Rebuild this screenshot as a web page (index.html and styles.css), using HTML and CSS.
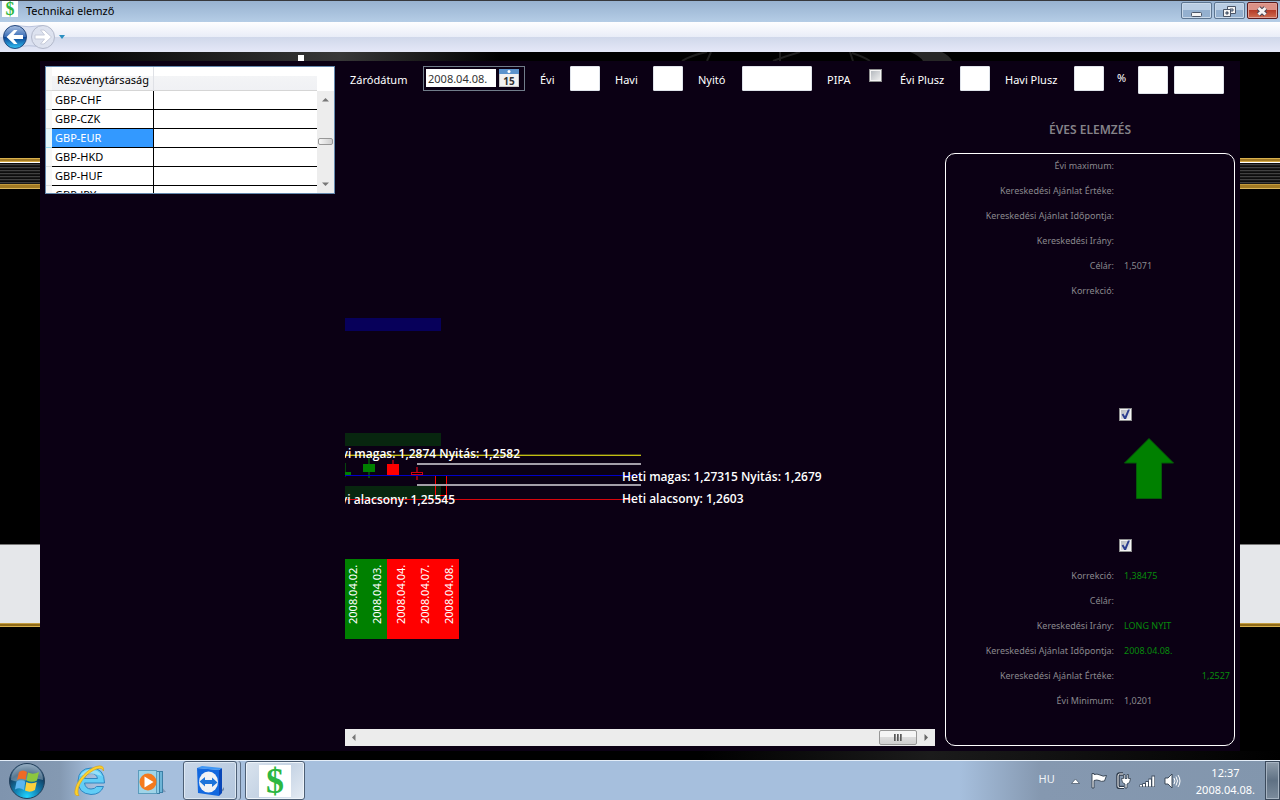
FILE: index.html
```html
<!DOCTYPE html>
<html lang="hu">
<head>
<meta charset="utf-8">
<title>Technikai elemző</title>
<link rel="stylesheet" href="styles.css">
</head>
<body>
<div class="window">
  <header class="titlebar">
    <span class="logo logo-small">$</span>
    <h1 class="title">Technikai elemző</h1>
    <div class="win-buttons">
      <button class="win-btn" aria-label="Kis méret"><svg width="31" height="16"><rect x="10.500" y="9.500" width="10" height="4" rx="1" fill="#f4f4f4" stroke="#4a5567"/></svg></button>
      <button class="win-btn" aria-label="Előző méret"><svg width="31" height="16"><g fill="#f4f4f4" stroke="#4a5567"><path d="M13.500 3.500H21.500V10.500H13.500ZM16 6V8H19V6Z" fill-rule="evenodd"/><path d="M9.500 6.500H16.500V13.500H9.500ZM12 9V11H14V9Z" fill-rule="evenodd"/></g></svg></button>
      <button class="win-btn win-close" aria-label="Bezárás"><svg width="31" height="16"><path d="M11.500 5l7 6.500M18.500 5l-7 6.500" stroke="#4b4654" stroke-width="5"/><path d="M11.500 5l7 6.500M18.500 5l-7 6.500" stroke="#f6f2f2" stroke-width="3"/></svg></button>
    </div>
  </header>

  <nav class="navbar">
    <svg class="nav-link-shape" width="70" height="30" aria-hidden="true"><path d="M15 3.500Q29 6 43 3.500V25.500Q29 22 15 25.500Z" fill="#dbe1f1" stroke="#b9c2dc"/></svg>
    <button class="nav-btn" aria-label="Vissza"><svg width="26" height="26" viewBox="0 0 26 26"><defs><linearGradient id="b1" x2="0" y2="1"><stop offset="0" stop-color="#a9bfe0"/><stop offset=".48" stop-color="#3c6fb8"/><stop offset=".5" stop-color="#0b3f91"/><stop offset="1" stop-color="#32c4f5"/></linearGradient></defs><circle cx="13" cy="13" r="11.500" fill="url(#b1)" stroke="#25497f"/><path d="M4.500 13L12 6H15.500L11.500 11H21V15H11.500L15.500 20H12Z" fill="#fff"/></svg></button>
    <button class="nav-btn" aria-label="Előre"><svg width="26" height="26" viewBox="0 0 26 26"><circle cx="13" cy="13" r="11.500" fill="#dde2ef" stroke="#b3b9cb"/><path d="M21.500 13L14 6H10.500L14.500 11H5V15H14.500L10.500 20H14Z" fill="#fff" stroke="#c5cad9"/></svg></button>
    <button class="nav-more" aria-label="Előzmények"><svg width="8" height="6"><path d="M1 1H7L4 5Z" fill="#2a8fc0"/></svg></button>
  </nav>

  <main class="stage">
    <svg class="backdrop" width="300" height="9" aria-hidden="true"><path d="M2 9Q12 3 27 0M27 9L31 0M93 9Q106 4 120 0M100 9V0M170 0l3 9M172 1Q184 5 190 9" fill="none" stroke="#1f1f1f" stroke-width="2"/><path d="M230 0H262Q270 4 272 9H243Q240 4 230 0Z" fill="#272727"/></svg>
    <span class="marker"></span>
    <div class="panel">
      <section class="grid-box">
        <table class="symbols">
          <thead><tr><th class="row-head"></th><th class="name">Részvénytársaság</th><th></th></tr></thead>
          <tbody>
            <tr><td class="row-head"></td><td class="name">GBP-CHF</td><td></td></tr>
            <tr><td class="row-head"></td><td class="name">GBP-CZK</td><td></td></tr>
            <tr class="selected"><td class="row-head"></td><td class="name">GBP-EUR</td><td></td></tr>
            <tr><td class="row-head"></td><td class="name">GBP-HKD</td><td></td></tr>
            <tr><td class="row-head"></td><td class="name">GBP-HUF</td><td></td></tr>
            <tr><td class="row-head"></td><td class="name">GBP-JPY</td><td></td></tr>
          </tbody>
        </table>
        <div class="vscroll">
          <button aria-label="Fel"><svg width="7" height="5"><path d="M0 4.500L3.500 1L7 4.500Z" fill="#777"/></svg></button>
          <span class="vthumb"></span>
          <button aria-label="Le"><svg width="7" height="5"><path d="M0 .5L3.500 4L7 .5Z" fill="#777"/></svg></button>
        </div>
      </section>

      <form class="toolbar">
        <label class="w58" for="date">Záródátum</label>
        <div class="date-picker">
          <input id="date" type="text" value="2008.04.08.">
          <button type="button" aria-label="Naptár"><svg width="20" height="18"><rect width="20" height="18" fill="#c9c9c9"/><rect x="1" y="5" width="18" height="12" fill="#f1f1f1"/><rect width="20" height="5" fill="#5b93cc"/><circle cx="10" cy="2.500" r="1.500" fill="#fff"/><text class="cal-text" x="10" y="16" text-anchor="middle">15</text></svg></button>
        </div>
        <label class="w15" for="evi">Évi</label><input class="box" id="evi" type="text">
        <label class="w23" for="havi">Havi</label><input class="box" id="havi" type="text">
        <label class="w29" for="nyito">Nyitó</label><input class="box box-wide" id="nyito" type="text">
        <label class="w27" for="pipa">PIPA</label><input class="check check-top" id="pipa" type="checkbox">
        <label class="w45" for="eviplusz">Évi Plusz</label><input class="box" id="eviplusz" type="text">
        <label class="w54" for="haviplusz">Havi Plusz</label><input class="box" id="haviplusz" type="text">
        <div class="percent"><label for="pct">%</label><input class="box box-tall" id="pct" type="text"><input class="box box-tall box-50" type="text" aria-label="Érték"></div>
      </form>

      <section class="chart">
        <svg class="plot" role="img" aria-label="Árfolyam grafikon">
          <rect y="214" width="96" height="13" fill="#07005a"/>
          <rect y="329" width="96" height="13" fill="#08260f"/>
          <rect x="90" y="371" width="12" height="21" fill="#000"/>
          <rect y="382" width="96" height="14" fill="#08260f"/>
          <rect y="350" width="296" height="1" fill="#4a4617"/>
          <rect y="351" width="296" height="1" fill="#c3bd10"/>
          <g fill="#06440c"><rect y="359" width="1" height="14"/><rect x="23" y="354" width="2" height="20"/></g>
          <g fill="green"><rect y="368" width="6" height="3"/><rect x="18" y="360" width="12" height="8"/></g>
          <g fill="#8c0012"><rect x="47" y="356" width="2" height="15"/><rect x="71" y="363" width="2" height="13"/></g>
          <rect x="42" y="360" width="12" height="11" fill="red"/>
          <rect x="66.500" y="368.500" width="11" height="2" fill="#000" stroke="#d00010"/>
          <path d="M90.500 391.500V371.500H101.500V391.500Z" fill="none" stroke="red"/>
          <path d="M0 371.500H296" stroke="#0000c8"/>
          <path d="M72 360H296M72 381H296" stroke="#a39ea8" stroke-width="2"/>
          <path d="M0 395.500H287" stroke="#d9050c"/>
          <g class="plot-text">
            <text x="175" y="354" text-anchor="end">vi magas: 1,2874 Nyitás: 1,2582</text>
            <text x="110" y="400" text-anchor="end">vi alacsony: 1,25545</text>
            <text x="277" y="377">Heti magas: 1,27315 Nyitás: 1,2679</text>
            <text x="277" y="399">Heti alacsony: 1,2603</text>
          </g>
          <rect y="455" width="42" height="80" fill="green"/>
          <rect x="42" y="455" width="72" height="80" fill="red"/>
          <g class="plot-dates">
            <text transform="translate(12 520) rotate(-90)">2008.04.02.</text>
            <text transform="translate(36 520) rotate(-90)">2008.04.03.</text>
            <text transform="translate(60 520) rotate(-90)">2008.04.04.</text>
            <text transform="translate(84 520) rotate(-90)">2008.04.07.</text>
            <text transform="translate(108 520) rotate(-90)">2008.04.08.</text>
          </g>
        </svg>
        <div class="hscroll">
          <button aria-label="Balra"><svg width="5" height="7"><path d="M4.500 0L1 3.500L4.500 7Z" fill="#777"/></svg></button>
          <span class="hthumb"><i></i><i></i><i></i></span>
          <button aria-label="Jobbra"><svg width="5" height="7"><path d="M.5 0L4 3.500L.5 7Z" fill="#666"/></svg></button>
        </div>
      </section>

      <aside class="analysis">
        <h2>ÉVES ELEMZÉS</h2>
        <div class="frame">
          <dl class="facts">
            <dt>Évi maximum:</dt><dd></dd>
            <dt>Kereskedési Ajánlat Értéke:</dt><dd></dd>
            <dt>Kereskedési Ajánlat Időpontja:</dt><dd></dd>
            <dt>Kereskedési Irány:</dt><dd></dd>
            <dt>Célár:</dt><dd>1,5071</dd>
            <dt>Korrekció:</dt><dd></dd>
          </dl>
          <div class="signal">
            <input class="check" type="checkbox" checked aria-label="Felső jelzés">
            <svg class="arrow" width="50" height="61" viewBox="0 0 50 61"><path d="M25 .5L49.500 25H37.500V60.500H12.500V25H.5Z" fill="green" stroke="#045a08"/></svg>
            <input class="check" type="checkbox" checked aria-label="Alsó jelzés">
          </div>
          <dl class="facts">
            <dt>Korrekció:</dt><dd class="green">1,38475</dd>
            <dt>Célár:</dt><dd></dd>
            <dt>Kereskedési Irány:</dt><dd class="green">LONG NYIT</dd>
            <dt>Kereskedési Ajánlat Időpontja:</dt><dd class="green">2008.04.08.</dd>
            <dt>Kereskedési Ajánlat Értéke:</dt><dd class="green right">1,2527</dd>
            <dt>Évi Minimum:</dt><dd>1,0201</dd>
          </dl>
        </div>
      </aside>
    </div>
  </main>

  <footer class="taskbar">
    <button class="task start" aria-label="Start"><svg width="38" height="38" viewBox="0 0 38 38"><defs><radialGradient id="orb" cx=".5" cy=".95" r=".9"><stop offset="0" stop-color="#22d4ff"/><stop offset=".4" stop-color="#117fb0"/><stop offset=".75" stop-color="#123f63"/><stop offset="1" stop-color="#5b7f9e"/></radialGradient></defs><circle cx="19" cy="19" r="17.500" fill="url(#orb)" stroke="#23405c"/><path d="M3 18A16 16 0 0 1 35 18Q27 15 19 18T3 18Z" fill="#fff" opacity=".3"/><path d="M11 10Q15 7 19 10L17.500 18Q13 15.500 9 18Z" fill="#ee6a25"/><path d="M20 10.500Q25 13 31 10L29 18.500Q24 21 18.500 18.500Z" fill="#8cc63e"/><path d="M8.500 19.500Q13 17 17.300 19.500L16 28Q11.500 25 7 27.500Z" fill="#5db6f0"/><path d="M18.300 20Q23 22.500 28.700 20L27 28Q22 31 17 28.500Z" fill="#fcd03c"/></svg></button>
    <button class="task ie" aria-label="Internet Explorer"><svg width="36" height="36" viewBox="0 0 36 36"><path d="M33.500 20H13.500Q14.500 26 20 26Q24 26 25.500 23.500H32.500Q29.500 31.500 20 31.500Q7 30.500 7 18Q7.500 5.500 20 5Q33.500 5 33.500 20ZM13.500 15.500H26.500Q25.500 10.500 20 10.500Q14.500 10.500 13.500 15.500Z" fill="#62cdf6" stroke="#2f86c2" fill-rule="evenodd"/><path d="M9 13Q12 7 19 6.500Q28 6.500 31 13Q20 9 9 13Z" fill="#b8ecfc" opacity=".6"/><path d="M8 32.500Q2 34 4.500 25C7 16 17 6 25 3.500Q33.500 1 32.500 8Q31 4 25.500 6C17 9 8 19 7 27Q6.500 30.500 8 32.500Z" fill="#fbd22c" stroke="#d69b12" stroke-width=".6"/></svg></button>
    <button class="task media" aria-label="Médialejátszó"><svg width="32" height="32" viewBox="0 0 32 32"><path d="M8 28l22-1-5-6Z" fill="#6f87a6" opacity=".7"/><rect x="9.500" y="6.500" width="17" height="21" fill="#6db4d6" stroke="#3c7fa6"/><rect x="6.500" y="6.500" width="17" height="22" fill="#8ccae4" stroke="#3c7fa6"/><rect x="2.500" y="5.500" width="18" height="23" fill="#9fd4e8" stroke="#5b9cbd"/><circle cx="12" cy="17" r="8.500" fill="#f47a1e"/><path d="M8.500 11.500L17.500 17L8.500 22.500Z" fill="#fff"/></svg></button>
    <button class="task open stacked" aria-label="TeamViewer"><svg width="32" height="32" viewBox="0 0 32 32"><path d="M24 30l6-5v-3Z" fill="#6f87a6"/><path d="M3 3L25 5V31L4 28Z" fill="#1268df"/><path d="M25 5L28 3V28L25 31Z" fill="#0a47b8"/><path d="M3 3L8 1L28 3L25 5Z" fill="#3f97f5"/><ellipse cx="14.500" cy="17" rx="9.500" ry="10.500" fill="#f0f2f5"/><path d="M5.500 16.500L11 12V15H18V12.500L23.500 17.500L18 22V19H11V21.500Z" fill="#1d74da"/></svg></button>
    <button class="task open" aria-label="Technikai elemző"><span class="logo">$</span></button>
    <div class="tray">
      <span class="lang">HU</span>
      <svg width="9" height="6"><path d="M.5 5.500L4.500 1L8.500 5.500Z" fill="#fff" stroke="#3f4d5e" stroke-width=".7"/></svg>
      <svg class="flag" width="16" height="17" viewBox="0 0 16 17"><path d="M1 16V1.500H3V2.500Q6 1.500 9 3Q12 5 15.500 3.500L13.500 9Q10 10 8 8.500Q6 7.500 3 8.500V16Z" fill="#fff" stroke="#303d4d" stroke-width=".9"/></svg>
      <svg width="15" height="17" viewBox="0 0 15 17"><path d="M7 2H3.500Q2 2 2 4V14Q2 15.500 3.500 15.500H8" fill="none" stroke="#303d4d" stroke-width="3.500"/><path d="M7 2H3.500Q2 2 2 4V14Q2 15.500 3.500 15.500H8" fill="none" stroke="#fff"/><path d="M5.500 6.500H7.500V2.500H9V6.500H11V2.500H12.500V6.500H14.500L13.500 10.500L11 12V16H9V12L6.500 10.500Z" fill="#fff" stroke="#303d4d" stroke-width=".8"/></svg>
      <svg width="17" height="14" viewBox="0 0 17 14"><path d="M.5 10.500H3.500V9H6.500V7H9.500V4.500H12.500V1.500H16V13H.5Z" fill="#3f4d5e"/><path d="M2 11V12.500M5 10V12.500M8 8V12.500M11 5.500V12.500M14.300 2.500V12.500" stroke="#fff" stroke-width="2"/></svg>
      <svg width="17" height="16" viewBox="0 0 17 16"><path d="M1 5H4L8 1V15L4 11H1Z" fill="#fff" stroke="#303d4d" stroke-width=".9"/><path d="M10 5Q12 8 10 11M12 3.500Q15 8 12 12.500M14 2Q18 8 14 14" fill="none" stroke="#fff"/></svg>
      <time class="clock"><span>12:37</span><span>2008.04.08.</span></time>
      <button class="show-desktop" aria-label="Asztal megjelenítése"></button>
    </div>
  </footer>
</div>
</body>
</html>
```
FILE: styles.css
```css
* { box-sizing: border-box; }
body { margin: 0; background: #000; color: #fff; font: 11px/16px "Noto Sans", "Open Sans", sans-serif; }
button, input { font: inherit; margin: 0; padding: 0; border: 0; }
button { background: none; display: flex; align-items: center; justify-content: center; }
svg { display: block; flex: none; }
h1, h2, dl, dd { margin: 0; }

.window { min-height: 100vh; display: flex; flex-direction: column; }

.titlebar { display: flex; height: 22px; border-top: 1px solid #37383c; background: linear-gradient(#98b2d0, #b5cde6); color: #000; padding: 0 2px; }
.title { font-size: 11px; font-weight: 400; line-height: 20px; flex: 1; }
.logo { width: 32px; height: 32px; background: #fff; color: #2cb742; font: 700 36px/32px "Liberation Serif", serif; text-align: center; }
.logo-small { width: 16px; height: 16px; margin-right: 8px; font-size: 18px; line-height: 16px; }
.win-buttons { display: flex; gap: 2px; padding-top: 1px; }
.win-btn { width: 31px; height: 17px; border: 1px solid #5d7590; border-radius: 2px; background: linear-gradient(#b9cde3 50%, #94b0cf 50%); box-shadow: inset 0 0 0 1px #c9d9ea; }
.win-close { border-color: #5c1a1c; background: linear-gradient(#dc9186 50%, #b63c28 50%, #cf6d51); box-shadow: inset 0 0 0 1px #e0a196; }

.navbar { position: relative; display: flex; align-items: center; gap: 2px; height: 30px; padding: 0 2px; background: linear-gradient(#fefeff, #e9edf7 50%, #d0d8ea 50%, #e5e8f8); }
.nav-link-shape { position: absolute; left: 0; top: 0; }
.nav-btn { position: relative; width: 26px; height: 26px; }
.nav-more { width: 8px; }

.stage {
  flex: 1; position: relative; display: flex; padding: 9px 40px;
  background:
    linear-gradient(90deg, #000 60px, #383838 340px, #000 500px, #000) 0 0 / 100% 9px no-repeat,
    linear-gradient(90deg, #000 700px, #1b1b1b 930px, #000) 0 100% / 100% 9px no-repeat,
    repeating-linear-gradient(#0d0d0d 0 1px, #414141 1px 2px, #191919 2px 3px) 0 111px / 100% 21px no-repeat,
    linear-gradient(#d7b04e 0 1px, #a27a24 1px 3px, #d4a945 3px 4px, #fff 4px 5px, #151515 5px 26px, #c39a3b 26px 27px, #a27a24 27px 30px, #dab65c 30px 31px) 0 106px / 100% 31px no-repeat,
    linear-gradient(#777 0 1px, #e5e7ea 1px 79px, #c49e42 79px 80px, #8f6a18 80px 82px, #d7b04e 82px 83px) 0 492px / 100% 83px no-repeat,
    #000;
}
.backdrop { position: absolute; left: 680px; top: 0; }
.marker { position: absolute; left: 298px; top: 3px; width: 6px; height: 6px; background: #fff; }
.panel {
  flex: 1; display: grid; gap: 10px; padding: 5px; background: #0b0014;
  grid-template: 28px 1fr / 290px minmax(0, 1fr) 290px;
}

.grid-box { grid-row: 1 / 3; height: 128px; display: flex; overflow: hidden; border: 1px solid #6489ae; background: #fff; color: #000; }
.symbols { flex: 1; border-collapse: separate; border-spacing: 0; table-layout: fixed; align-self: flex-start; }
.symbols th { height: 24px; padding: 2px 0 0; font-weight: 400; background: linear-gradient(#fff 40%, #f3f4f6 40%, #f0f1f4); border-bottom: 1px solid #d5d5d5; }
.symbols td { height: 19px; padding: 0; border-bottom: 1px solid #000; }
.symbols .row-head { width: 6px; background: #f7f7f7; border-bottom-color: #ddd; }
.symbols .name { width: 102px; padding-left: 3px; border-right: 1px solid #000; text-align: left; white-space: nowrap; }
.symbols th.name { padding-left: 5px; border-right-color: #dfe1e6; }
.selected .name { background: #3399ff; color: #fff; }
.symbols .selected .row-head { background: #e6f6fd; border-bottom-color: #9bdcf5; }
.vscroll { width: 17px; margin-top: 24px; background: #ededed; display: flex; flex-direction: column; align-items: center; }
.vscroll button { width: 17px; height: 17px; }
.vthumb { width: 15px; height: 7px; margin: 30px 0 auto; border: 1px solid #979797; border-radius: 2px; background: linear-gradient(90deg, #f7f7f7, #cfcfcf); }

.toolbar { grid-column: 2 / 4; display: flex; align-items: flex-start; gap: 15px; padding-left: 5px; }
.toolbar label { line-height: 28px; white-space: nowrap; }
.w58 { width: 58px; } .w15 { width: 15px; } .w23 { width: 23px; } .w29 { width: 29px; }
.w27 { width: 27px; } .w45 { width: 45px; } .w54 { width: 54px; }
.date-picker { display: flex; gap: 3px; width: 102px; height: 25px; padding: 2px; border: 1px solid #717d8a; }
.date-picker input { width: 70px; height: 18px; padding-left: 2px; background: #fff; color: #333; }
.date-picker button { width: 20px; height: 18px; }
.cal-text { font: 700 10px "Open Sans", sans-serif; fill: #333; }
.box { width: 30px; height: 25px; background: #fff; border: 1px solid #dfe3ea; border-radius: 1px; }
.box-wide { width: 70px; }
.box-tall { height: 28px; }
.box-50 { width: 50px; }
.percent { display: flex; gap: 6px; margin-left: -2px; }
.percent label { width: 15px; line-height: 24px; }
.check { appearance: none; width: 13px; height: 13px; border: 1px solid #8e8f8f; background: linear-gradient(135deg, #aeb3b9, #f3f3f3); box-shadow: inset 0 0 0 1px #f4f4f4; }
.check-top { margin: 3px 3px 0 0; }
.check:checked::after { content: ""; display: block; width: 11px; height: 11px; background: #2b3d8f; clip-path: polygon(15% 50%, 30% 42%, 45% 65%, 72% 5%, 90% 5%, 55% 92%, 38% 92%); }

.chart { grid-column: 2; display: flex; flex-direction: column; }
.plot { width: 100%; height: auto; min-height: 620px; flex: 1; overflow: hidden; }
.plot-text { fill: #fff; font-family: "Open Sans", sans-serif; font-size: 12px; font-weight: 600; }
.plot-dates { fill: #fff; font-size: 11px; }
.hscroll { display: flex; align-items: center; height: 17px; background: #ececec; }
.hscroll button { width: 17px; height: 17px; }
.hthumb { display: flex; align-items: center; justify-content: center; gap: 1px; width: 38px; height: 15px; margin: 0 1px 0 auto; border: 1px solid #979797; border-radius: 2px; background: linear-gradient(#f5f5f5 50%, #dcdcdc 50%, #d0d0d0); }
.hthumb i { width: 2px; height: 7px; background: linear-gradient(90deg, #444, #999); }

.analysis { display: flex; flex-direction: column; }
.analysis h2 { padding: 18px 0 16px; font-size: 12px; line-height: 15px; font-weight: 600; text-align: center; color: #858389; }
.frame { flex: 1; border: 1px solid #fff; border-radius: 10px; }
.facts { display: grid; grid-template-columns: 168px 1fr; grid-auto-rows: 25px; column-gap: 10px; padding-right: 4px; font-size: 9px; line-height: 24px; color: #8a888d; }
.facts dt { text-align: right; white-space: nowrap; }
.facts .green { color: #078a0c; }
.facts .right { text-align: right; }
.signal { display: flex; flex-direction: column; height: 260px; padding: 104px 0 0 173px; }
.arrow { margin: 17px 0 40px 5px; }

.taskbar { display: flex; height: 40px; border-top: 1px solid #e3edf8; background: linear-gradient(90deg, #7f94ae, #8499b2 60px, #a6bfdd 95px, #a6bfdd 960px, #8598b0 1040px, #8296ad); box-shadow: 0 -1px #536578; }
.task { height: 39px; }
.start { width: 38px; margin: 0 24px 0 8px; }
.ie { width: 38px; margin-right: 28px; }
.media { width: 32px; margin-right: 15px; }
.task.open { width: 60px; border: 1px solid #4d5f75; border-radius: 3px; background: linear-gradient(135deg, #d9e3ee, #c5d3e4 50%, #e5ecf4); box-shadow: inset 0 0 0 1px #eef4fa; }
.task.stacked { width: 54px; margin-right: 8px; box-shadow: inset 0 0 0 1px #dde8f3, 3px 0 #b9cadf, 4px 0 #5e7087; background: linear-gradient(135deg, #c9d7e8, #b3c6dd); }
.tray { display: flex; align-items: center; gap: 8px; margin-left: auto; }
.lang { padding: 0 8px 4px 0; font-size: 11px; color: #eef2f6; }
.flag { margin: 0 1px 0 3px; }
.clock { display: flex; flex-direction: column; align-items: center; margin-left: 7px; line-height: 17px; }
.show-desktop { width: 15px; height: 39px; margin-left: 2px; border: 1px solid #3b4a5c; background: linear-gradient(#8f9dab, #5f7184 50%, #7b8b9c); box-shadow: inset 0 0 0 1px #a6b3c1; }
```
